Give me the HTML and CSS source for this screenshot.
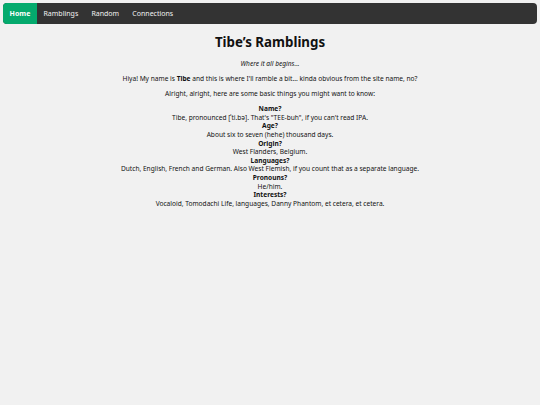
FILE: index.html
```html
<!DOCTYPE html>
<html lang="en">
<head>
<meta charset="utf-8">
<title>Tibe's Ramblings</title>
<link rel="stylesheet" href="styles.css">
</head>
<body>
<nav class="topnav">
  <a class="nav-link active" href="#">Home</a>
  <a class="nav-link" href="#">Ramblings</a>
  <a class="nav-link" href="#">Random</a>
  <a class="nav-link" href="#">Connections</a>
</nav>
<main class="content">
  <h1 class="title">Tibe’s Ramblings</h1>
  <p class="tagline">Where it all begins...</p>
  <p class="para">Hiya! My name is <b>Tibe</b> and this is where I'll ramble a bit... kinda obvious from the site name, no?</p>
  <p class="para">Alright, alright, here are some basic things you might want to know:</p>
  <dl class="facts">
    <dt>Name?</dt>
    <dd>Tibe, pronounced [<span class="ipa">ˈti.bə</span>]. That's "TEE-buh", if you can't read IPA.</dd>
    <dt>Age?</dt>
    <dd>About six to seven (hehe) thousand days.</dd>
    <dt>Origin?</dt>
    <dd>West Flanders, Belgium.</dd>
    <dt>Languages?</dt>
    <dd>Dutch, English, French and German. Also West Flemish, if you count that as a separate language.</dd>
    <dt>Pronouns?</dt>
    <dd>He/him.</dd>
    <dt>Interests?</dt>
    <dd>Vocaloid, Tomodachi Life, languages, Danny Phantom, et cetera, et cetera.</dd>
  </dl>
</main>
</body>
</html>
```
FILE: styles.css
```css
html, body {
  margin: 0;
  padding: 0;
  background: #f1f1f1;
  color: #111;
  font-family: "Noto Sans", "Open Sans", sans-serif;
}
.topnav {
  display: flex;
  margin: 3px;
  height: 21px;
  background: #333;
  border-radius: 4px;
  overflow: hidden;
}
.nav-link {
  display: flex;
  align-items: center;
  padding: 0 6.6px;
  color: #f2f2f2;
  text-decoration: none;
  font-size: 7px;
}
.nav-link.active {
  background: #04aa6d;
  color: #fff;
  font-weight: bold;
}
.content {
  text-align: center;
  font-size: 6.6px;
}
.title {
  margin: 8px 0 0;
  font-size: 13.3px;
  font-weight: bold;
  line-height: 20px;
}
.tagline {
  margin: 7px 0 0;
  font-style: italic;
  line-height: 9px;
}
.para {
  margin: 6px 0 0;
  line-height: 9px;
}
.facts {
  margin: 7px 0 0;
  line-height: 8.64px;
}
.facts dt {
  font-weight: bold;
}
.facts dd {
  margin: 0;
}
```
